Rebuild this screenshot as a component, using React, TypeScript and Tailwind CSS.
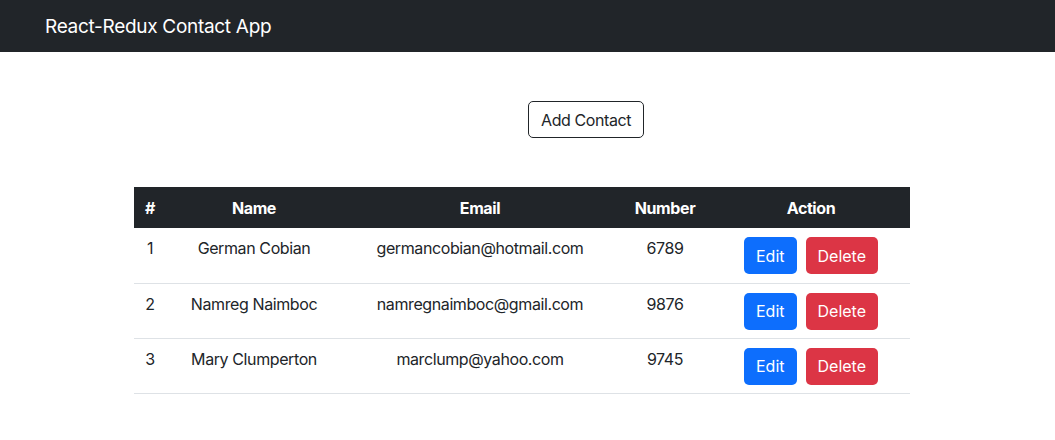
import React from 'react';

interface Contact {
  id: number;
  name: string;
  email: string;
  number: string;
}

const CONTACTS: Contact[] = [
  { id: 1, name: 'German Cobian', email: 'germancobian@hotmail.com', number: '6789' },
  { id: 2, name: 'Namreg Naimboc', email: 'namregnaimboc@gmail.com', number: '9876' },
  { id: 3, name: 'Mary Clumperton', email: 'marclump@yahoo.com', number: '9745' },
];

export default function App() {
  return (
    <div className="min-h-[440px] bg-white text-[#212529] font-['Inter','Liberation_Sans',sans-serif] text-base tracking-[-0.4px]">
      <nav className="h-[52px] bg-[#212529] flex items-center px-[45px]">
        <span className="text-white text-[19px] tracking-[-0.3px] leading-none">React-Redux Contact App</span>
      </nav>

      <main className="pt-[49px]">
        <div className="pl-[528px]">
          <button className="h-[37px] px-3 border border-[#212529] rounded-[5px] text-base text-[#212529] bg-white">
            Add Contact
          </button>
        </div>

        <div className="pl-[134px] pt-[49px]">
          <table className="w-[776px] border-collapse">
            <thead>
              <tr className="bg-[#212529] text-white font-bold">
                <th className="w-[32px] h-[41px] px-2 text-center">#</th>
                <th className="w-[176px] px-2 text-center">Name</th>
                <th className="w-[276px] px-2 text-center">Email</th>
                <th className="w-[94px] px-2 text-center">Number</th>
                <th className="px-2 text-center">Action</th>
              </tr>
            </thead>
            <tbody>
              {CONTACTS.map(c => (
                <tr key={c.id} className="border-b border-[#dee2e6] h-[55px]">
                  <td className="px-2 pt-2 align-top text-center leading-6">{c.id}</td>
                  <td className="px-2 pt-2 align-top text-center leading-6">{c.name}</td>
                  <td className="px-2 pt-2 align-top text-center leading-6">{c.email}</td>
                  <td className="px-2 pt-2 align-top text-center leading-6">{c.number}</td>
                  <td className="px-2 pt-[9px] align-top text-center">
                    <div className="flex justify-center gap-[9px] tracking-normal">
                      <button className="h-[37px] px-3 rounded-[5px] bg-[#0d6efd] text-white">Edit</button>
                      <button className="h-[37px] px-3 rounded-[5px] bg-[#dc3545] text-white">Delete</button>
                    </div>
                  </td>
                </tr>
              ))}
            </tbody>
          </table>
        </div>
      </main>
    </div>
  );
}
